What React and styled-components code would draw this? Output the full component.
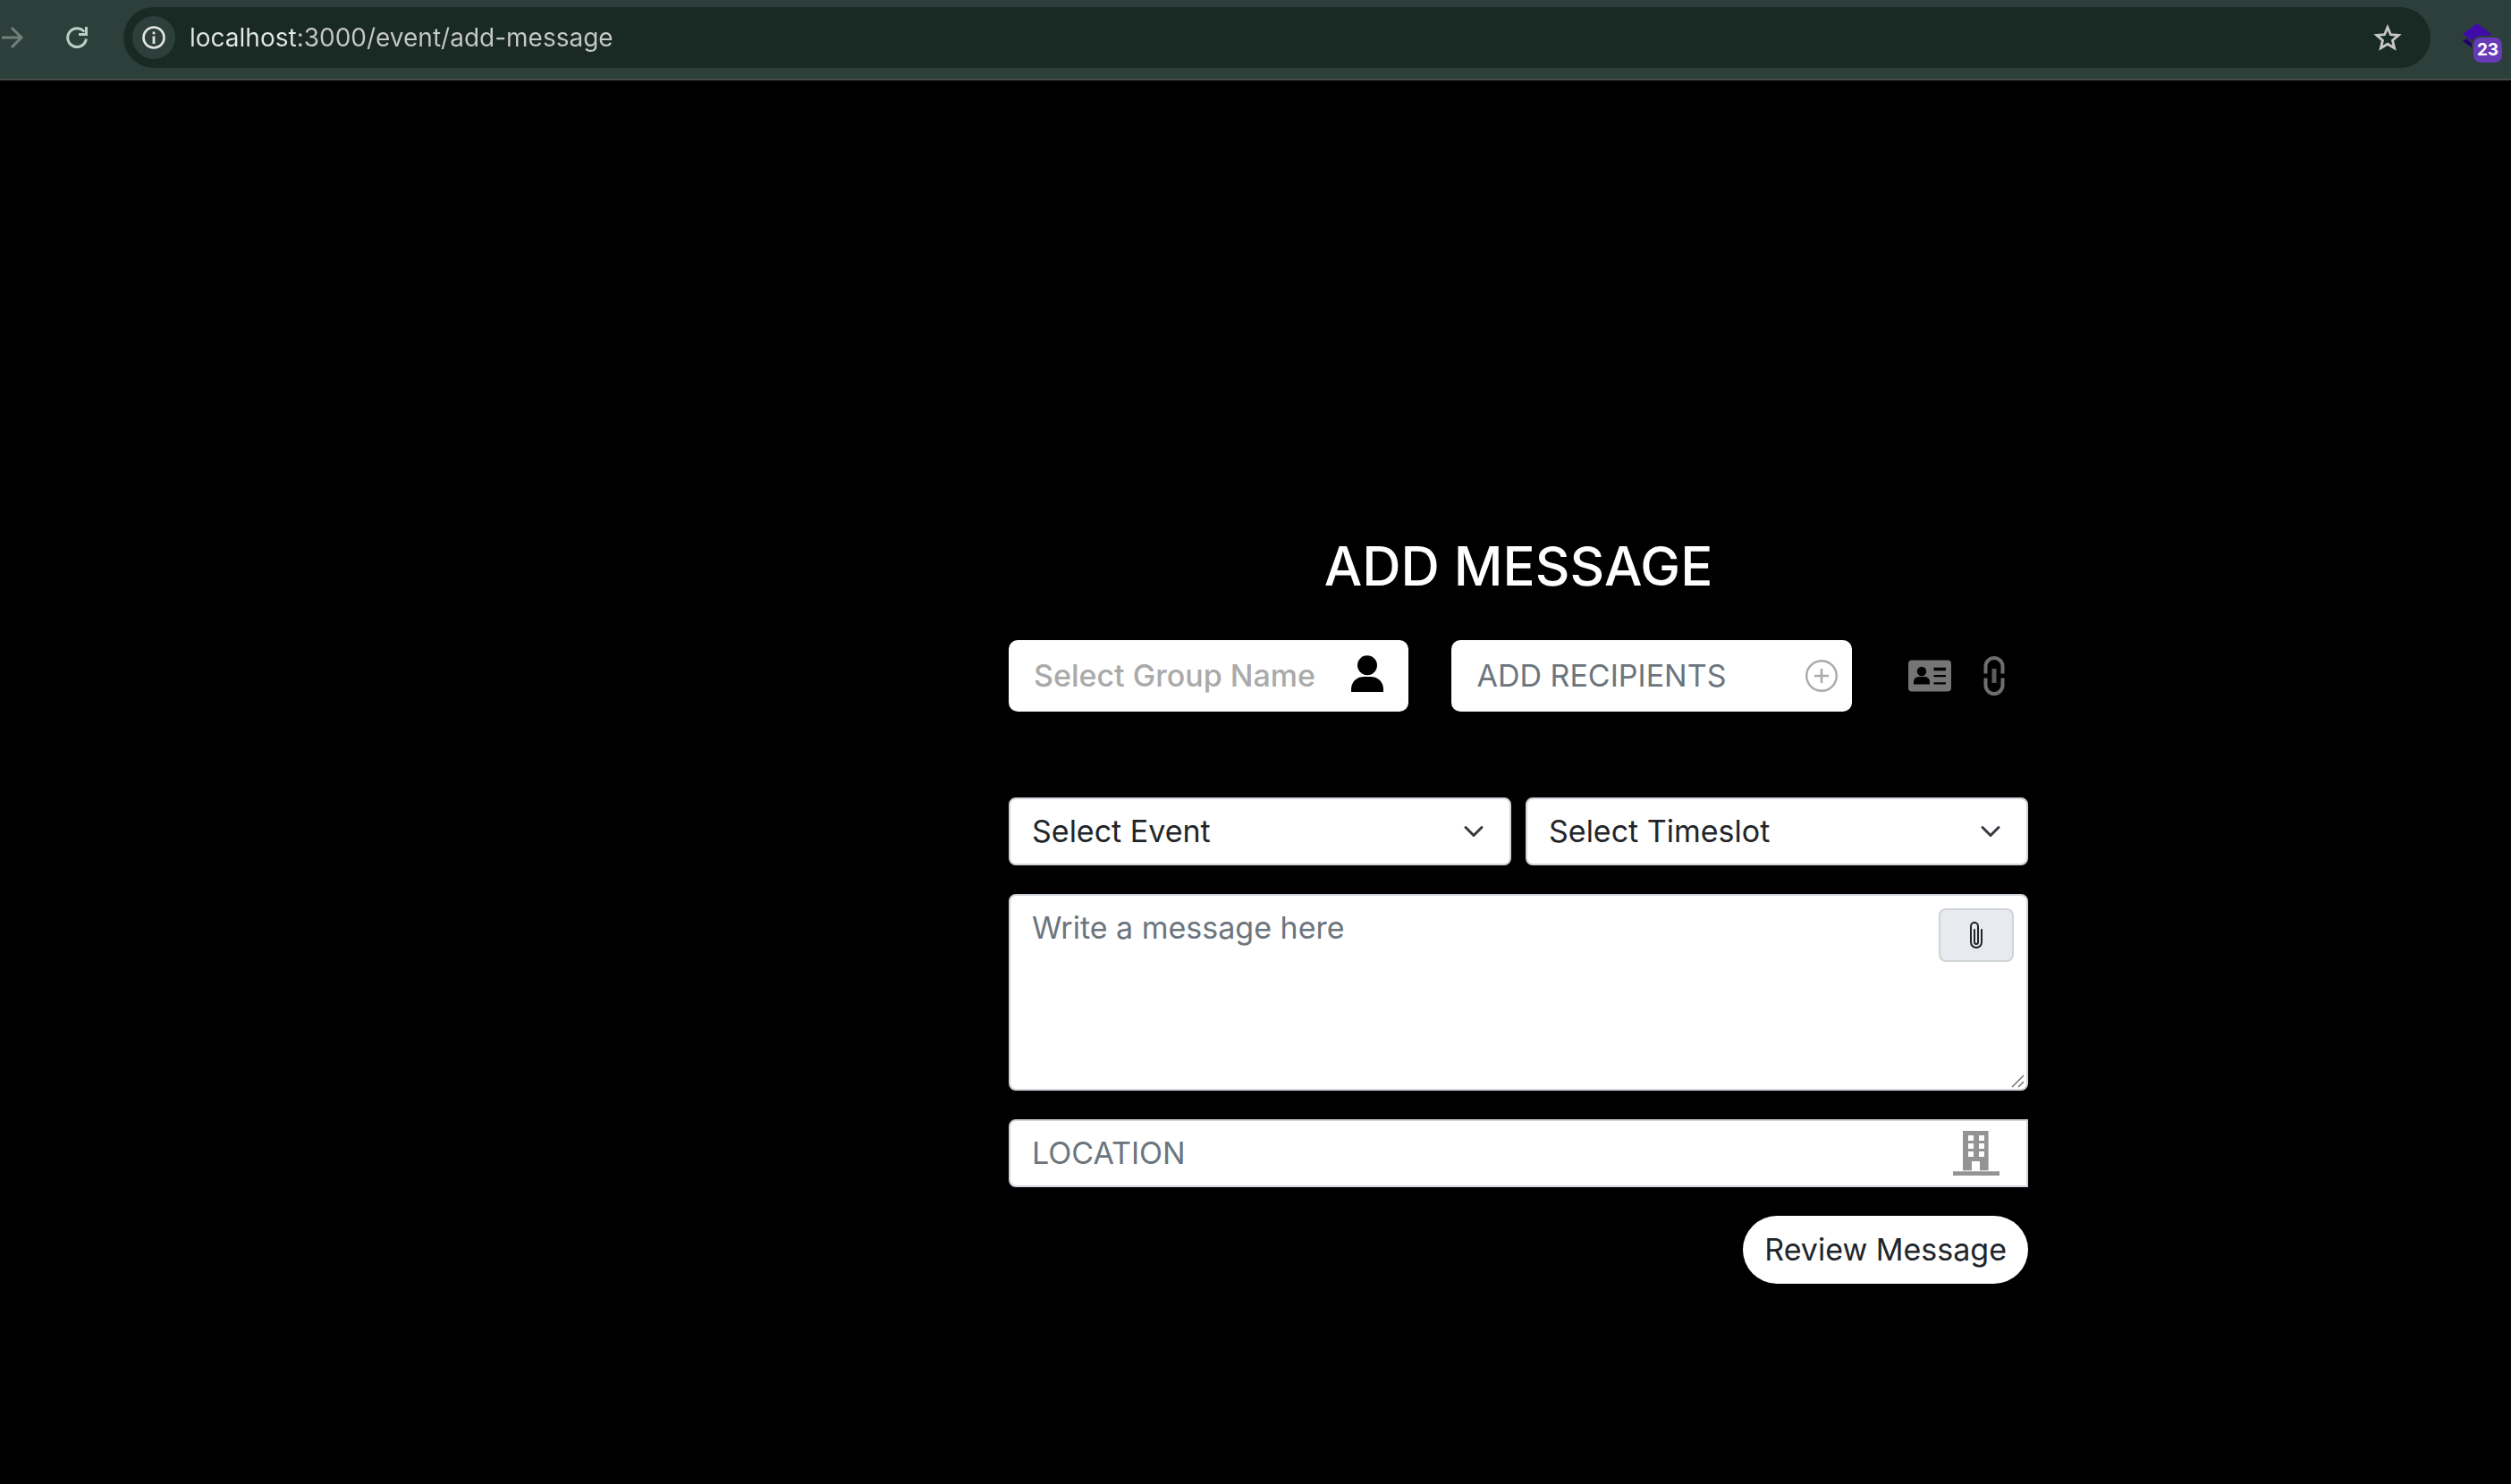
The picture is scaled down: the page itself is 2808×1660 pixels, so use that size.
import React from 'react';
import styled, { createGlobalStyle } from 'styled-components';

const GlobalStyle = createGlobalStyle`
  *, *::before, *::after { box-sizing: border-box; }
  body {
    margin: 0;
    background: #000;
    color: #212529;
    font-family: Inter, "Liberation Sans", sans-serif;
  }
  button, input, select, textarea { font: inherit; color: inherit; }
  button { cursor: pointer; }
  svg { display: block; flex: none; }
`;

/* ---------- browser bar ---------- */

const Toolbar = styled.header`
  display: flex;
  align-items: center;
  padding: 8px 10px 12px 0;
  background: #2d3f3a;
  border-bottom: 2px solid #474b49;
`;

const NavButton = styled.button`
  display: flex;
  align-items: center;
  justify-content: center;
  width: ${(p) => p.$width}px;
  height: 48px;
  margin-right: ${(p) => p.$after}px;
  padding: 0;
  border: 0;
  background: none;
  color: ${(p) => p.$color};
`;

const AddressBar = styled.div`
  flex: 1;
  display: flex;
  align-items: center;
  height: 68px;
  padding: 0 32px 0 10px;
  border-radius: 34px;
  background: #192923;
`;

const SiteInfo = styled.button`
  display: flex;
  align-items: center;
  justify-content: center;
  width: 48px;
  height: 48px;
  padding: 0;
  border: 0;
  border-radius: 50%;
  background: #2d3f3a;
  color: #e3e6e3;
`;

const Address = styled.input`
  flex: 1;
  min-width: 0;
  margin: 0 16px;
  padding: 0;
  border: 0;
  outline: 0;
  font-size: 28px;
  line-height: 40px;
  background: linear-gradient(90deg, #e3e8e4 120px, #c5c8c6 120px);
  background-clip: text;
  -webkit-text-fill-color: transparent;
`;

const Extension = styled.button`
  position: relative;
  align-self: flex-start;
  width: 44px;
  height: 44px;
  margin: 18px 0 0 36px;
  padding: 0;
  border: 0;
  background: none;
`;

const Badge = styled.span`
  position: absolute;
  right: 0;
  bottom: 0;
  width: 32px;
  border-radius: 8px;
  background: #673ab7;
  box-shadow: 0 0 0 2px #2d3f3a;
  color: #fff;
  font-size: 19px;
  font-weight: 700;
  line-height: 28px;
  text-align: center;
`;

/* ---------- form ---------- */

const Main = styled.main`
  display: flex;
  justify-content: center;
  padding: 510px 0 64px 588px;
`;

const Form = styled.form`
  display: flex;
  flex-direction: column;
  gap: 32px;
  width: 100%;
  max-width: 1140px;
  font-size: 34px;
  line-height: 48px;
`;

const Title = styled.h1`
  margin: 0 0 18px;
  color: #fff;
  font-size: 60px;
  font-weight: 500;
  line-height: 66px;
  text-align: center;
`;

const RecipientRow = styled.div`
  display: grid;
  grid-template-columns: minmax(0, 3fr) minmax(0, 3fr) minmax(0, 1fr);
  column-gap: 48px;
  margin-bottom: 64px;
`;

const SelectRow = styled.div`
  display: grid;
  grid-template-columns: 1fr 1fr;
  column-gap: 16px;
`;

const Field = styled.label`
  display: flex;
  align-items: center;
  height: 80px;
  padding: 0 ${(p) => p.$end}px 0 28px;
  border-radius: 10px;
  background: #fff;
`;

const LocationField = styled(Field)`
  height: 76px;
  padding-left: 24px;
  border: 2px solid #ced4da;
  border-radius: 8px 0 0 8px;
`;

const TextInput = styled.input`
  flex: 1;
  min-width: 0;
  padding: 0;
  border: 0;
  outline: 0;
  background: transparent;

  &::placeholder {
    color: ${(p) => (p.$strong ? '#aaa' : '#6c757d')};
    font-weight: ${(p) => (p.$strong ? 500 : 400)};
    opacity: 1;
  }
`;

const RowActions = styled.div`
  display: flex;
  align-items: center;
  gap: 36px;
  padding-left: 15px;
`;

const IconButton = styled.button`
  padding: 0;
  border: 0;
  background: none;
`;

const SelectWrap = styled.label`
  position: relative;
`;

const Select = styled.select`
  display: block;
  width: 100%;
  height: 76px;
  padding: 0 72px 0 24px;
  border: 2px solid #ced4da;
  border-radius: 8px;
  background: #fff;
  appearance: none;
`;

const Chevron = styled.svg`
  position: absolute;
  top: 26px;
  right: 30px;
  pointer-events: none;
`;

const MessageWrap = styled.div`
  position: relative;
`;

const MessageBox = styled.textarea`
  display: block;
  width: 100%;
  height: 220px;
  padding: 12px 120px 12px 24px;
  border: 2px solid #ced4da;
  border-radius: 8px;
  background: #fff;
  resize: none;

  &::placeholder { color: #6c757d; opacity: 1; }
`;

const AttachButton = styled.button`
  position: absolute;
  top: 16px;
  right: 16px;
  display: flex;
  align-items: center;
  justify-content: center;
  width: 84px;
  height: 60px;
  padding: 0;
  border: 2px solid #ced4d7;
  border-radius: 8px;
  background: #e9eaef;
`;

const Grip = styled.svg`
  position: absolute;
  right: 3px;
  bottom: 3px;
  pointer-events: none;
`;

const ReviewButton = styled.button`
  align-self: flex-end;
  height: 76px;
  padding: 0 24px;
  border: 0;
  border-radius: 38px;
  background: #fff;
`;

/* ---------- icons ---------- */

const ForwardIcon = () => (
  <svg width="28" height="24" viewBox="0 0 28 24" fill="none" stroke="currentColor" strokeWidth="3">
    <path d="M2 12H24M13 1l11 11-11 11" />
  </svg>
);

const ReloadIcon = () => (
  <svg width="24" height="24" viewBox="0 0 24 24" fill="none" stroke="currentColor" strokeWidth="3">
    <path d="M22.4 13.5A10.4 10.4 0 1 1 20.2 5.6" />
    <path d="M22.5 0V8.5H14" />
  </svg>
);

const InfoIcon = () => (
  <svg width="26" height="26" viewBox="0 0 26 26" fill="none" stroke="currentColor">
    <circle cx="13" cy="13" r="11.5" strokeWidth="2.6" />
    <path d="M13 11.5V20M13 6.6V9.2" strokeWidth="2.8" />
  </svg>
);

const StarIcon = () => (
  <svg width="32" height="30" viewBox="0 0 32 30" fill="none" stroke="currentColor" strokeWidth="2.8">
    <path d="M16 3.5 19.4 11.7 28.2 12.4 21.5 18.2 23.6 26.8 16 22.2 8.4 26.8 10.5 18.2 3.8 12.4 12.6 11.7Z" />
  </svg>
);

const KiteIcon = () => (
  <svg width="32" height="28" viewBox="0 0 32 28">
    <path d="M0 20 4 17 16 28H11Z" fill="#1f006e" />
    <path d="M16 0 32 12 16 24 0 12Z" fill="#400ba8" />
  </svg>
);

const ExtensionArt = styled.span`
  position: absolute;
  top: 0;
  left: 0;
`;

const PersonIcon = () => (
  <svg width="36" height="46" viewBox="0 0 36 46" fill="#000">
    <circle cx="18" cy="11.2" r="11" />
    <path d="M0 41V38C0 30 6 24 14 24H22C30 24 36 30 36 38V41Z" />
  </svg>
);

const PlusCircleIcon = () => (
  <svg width="36" height="36" viewBox="0 0 36 36" fill="none" stroke="#aaa">
    <circle cx="18" cy="18" r="16.8" strokeWidth="2.4" />
    <path d="M10 18H26M18 10V26" strokeWidth="2.6" />
  </svg>
);

const CardIcon = () => (
  <svg width="48" height="36" viewBox="0 0 48 36">
    <rect y="0.5" width="48" height="35" rx="4" fill="#757575" />
    <circle cx="15" cy="13" r="5.2" />
    <path d="M6 27.5V25c0-4 3-6 6-6h6c3 0 6 2 6 6v2.5Z" />
    <path d="M28.5 8.7H42V12.2H28.5ZM28.5 17H42V19.2H28.5ZM28.5 25.2H42V27.4H28.5Z" />
  </svg>
);

const LinkIcon = () => (
  <svg width="24" height="44" viewBox="0 0 24 44" fill="none" stroke="#6e6e6e">
    <path d="M2.5 19.5V11.5a9.5 9.5 0 0 1 19 0V19.5M2.5 24.5V32.5a9.500 9.500 0 0 0 19 0V24.5" strokeWidth="4" />
    <path d="M12 14V30" strokeWidth="5" stroke="#5c5c5c" />
  </svg>
);

const ChevronIcon = () => (
  <Chevron width="24" height="24" viewBox="0 0 16 16" fill="none" stroke="#343a40" strokeWidth="2" strokeLinecap="round" strokeLinejoin="round">
    <path d="m2 5 6 6 6-6" />
  </Chevron>
);

const ClipIcon = () => (
  <svg width="32" height="32" viewBox="0 0 16 16" fill="currentColor">
    <path d="M4.5 3a2.5 2.5 0 0 1 5 0v9a1.5 1.5 0 0 1-3 0V5a.5.5 0 0 1 1 0v7a.5.5 0 0 0 1 0V3a1.5 1.5 0 1 0-3 0v9a2.5 2.5 0 0 0 5 0V5a.5.5 0 0 1 1 0v7a3.5 3.5 0 1 1-7 0z" />
  </svg>
);

const BuildingIcon = () => (
  <svg width="52" height="50" viewBox="0 0 52 50" fill="#949494">
    <path
      fillRule="evenodd"
      d="M11 0H39.6V44.3H30V34H21V44.3H11ZM17 5V11H23V5ZM29 5V11H35V5ZM17 14V20H23V14ZM29 14V20H35V14ZM17 23V29H23V23ZM29 23V29H35V23Z"
    />
    <path d="M0 45.2H52V50H0Z" />
  </svg>
);

function Dropdown({ label }) {
  return (
    <SelectWrap>
      <Select aria-label={label} defaultValue="">
        <option value="">{label}</option>
      </Select>
      <ChevronIcon />
    </SelectWrap>
  );
}

export default function App() {
  return (
    <>
      <GlobalStyle />
      <Toolbar>
        <NavButton type="button" aria-label="Forward" $width={28} $after={32} $color="#70807a">
          <ForwardIcon />
        </NavButton>
        <NavButton type="button" aria-label="Reload" $width={52} $after={26} $color="#b9d0c8">
          <ReloadIcon />
        </NavButton>
        <AddressBar>
          <SiteInfo type="button" aria-label="Site information">
            <InfoIcon />
          </SiteInfo>
          <Address type="text" aria-label="Address" defaultValue="localhost:3000/event/add-message" />
          <NavButton type="button" aria-label="Bookmark" $width={32} $after={0} $color="#c7c7c7">
            <StarIcon />
          </NavButton>
        </AddressBar>
        <Extension type="button" aria-label="Extension, 23 notifications">
          <ExtensionArt>
            <KiteIcon />
          </ExtensionArt>
          <Badge>23</Badge>
        </Extension>
      </Toolbar>

      <Main>
        <Form onSubmit={(e) => e.preventDefault()}>
          <Title>ADD MESSAGE</Title>

          <RecipientRow>
            <Field $end={28}>
              <TextInput type="text" aria-label="Group name" placeholder="Select Group Name" $strong />
              <PersonIcon />
            </Field>
            <Field $end={16}>
              <TextInput type="text" aria-label="Recipients" placeholder="ADD RECIPIENTS" />
              <IconButton type="button" aria-label="Add recipient">
                <PlusCircleIcon />
              </IconButton>
            </Field>
            <RowActions>
              <IconButton type="button" aria-label="Contacts">
                <CardIcon />
              </IconButton>
              <IconButton type="button" aria-label="Link">
                <LinkIcon />
              </IconButton>
            </RowActions>
          </RecipientRow>

          <SelectRow>
            <Dropdown label="Select Event" />
            <Dropdown label="Select Timeslot" />
          </SelectRow>

          <MessageWrap>
            <MessageBox aria-label="Message" placeholder="Write a message here" />
            <AttachButton type="button" aria-label="Attach file">
              <ClipIcon />
            </AttachButton>
            <Grip width="16" height="16" viewBox="0 0 16 16" stroke="#666" strokeWidth="1.4">
              <path d="M1 15 14 2M8 15 14 9" />
            </Grip>
          </MessageWrap>

          <LocationField $end={30}>
            <TextInput type="text" aria-label="Location" placeholder="LOCATION" />
            <BuildingIcon />
          </LocationField>

          <ReviewButton type="submit">Review Message</ReviewButton>
        </Form>
      </Main>
    </>
  );
}
